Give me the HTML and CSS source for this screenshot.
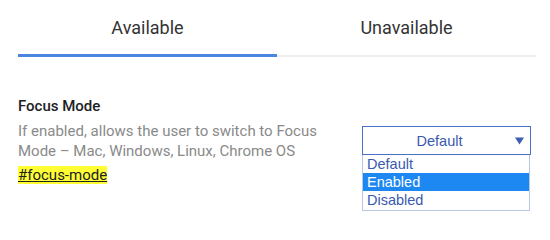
FILE: index.html
```html
<!DOCTYPE html>
<html lang="en">
<head>
<meta charset="utf-8">
<title>Flags</title>
<link rel="stylesheet" href="styles.css">
</head>
<body>
<div class="page">
  <div class="tabs">
    <div class="tab active">Available</div>
    <div class="tab">Unavailable</div>
  </div>
  <div class="experiment">
    <div class="info">
      <h3 class="title">Focus Mode</h3>
      <p class="desc">If enabled, allows the user to switch to Focus Mode – Mac, Windows, Linux, Chrome OS</p>
      <p class="tag"><a class="permalink" href="#focus-mode">#focus-mode</a></p>
    </div>
    <div class="control">
      <div class="select">
        <span class="select-value">Default</span>
        <svg class="arrow" width="9" height="8" viewBox="0 0 9 8"><path d="M0 0.5H9L4.5 7.5Z" fill="#3d5cb4"/></svg>
      </div>
      <ul class="options">
        <li class="option">Default</li>
        <li class="option selected">Enabled</li>
        <li class="option">Disabled</li>
      </ul>
    </div>
  </div>
</div>
</body>
</html>
```
FILE: styles.css
```css
html, body {
  margin: 0;
  padding: 0;
  background: #ffffff;
}

body {
  min-height: 229px;
}

.page {
  padding: 0 14px 40px 18px;
  font-family: Roboto, "Liberation Sans", sans-serif;
}

.tabs {
  display: flex;
  padding-top: 18px;
}

.tab {
  flex: 1;
  text-align: center;
  font-size: 18px;
  line-height: 20px;
  color: #333333;
  padding-bottom: 17px;
  border-bottom: 2px solid #eeeeee;
}

.tab.active {
  padding-bottom: 16px;
  border-bottom: 3px solid #4a86e0;
}

.experiment {
  display: flex;
  margin-top: 39px;
  padding-right: 5px;
}

.info {
  flex: 1;
  max-width: 310px;
}

.title {
  margin: 0;
  font-size: 15px;
  line-height: 20px;
  font-weight: 500;
  color: #202124;
}

.desc {
  margin: 5px 0 0;
  font-size: 15px;
  line-height: 20px;
  color: #8a8a8a;
}

.tag {
  margin: 4px 0 0;
  font-size: 15px;
  line-height: 20px;
}

.permalink {
  color: #202124;
  background: #ffff33;
  text-decoration: underline;
}

.control {
  margin-left: auto;
  margin-top: 30px;
  width: 169px;
  position: relative;
  font-family: "Liberation Sans", Arial, sans-serif;
}

.select {
  box-sizing: border-box;
  height: 29px;
  border: 1px solid #4b6fc7;
  display: flex;
  align-items: center;
  justify-content: center;
  position: relative;
  font-size: 14.5px;
  color: #3a59b0;
  padding-right: 14px;
}

.arrow {
  position: absolute;
  right: 6px;
  top: 10px;
}

.options {
  position: absolute;
  left: 0;
  right: 1px;
  top: 29px;
  margin: 0;
  padding: 0 0 1px;
  list-style: none;
  border: 1px solid #b9c6e2;
  border-top: none;
  background: #ffffff;
}

.option {
  height: 18px;
  line-height: 18px;
  padding-left: 4px;
  font-size: 14.5px;
  color: #3a59b0;
}

.option.selected {
  background: #1e88f2;
  color: #ffffff;
}
```
